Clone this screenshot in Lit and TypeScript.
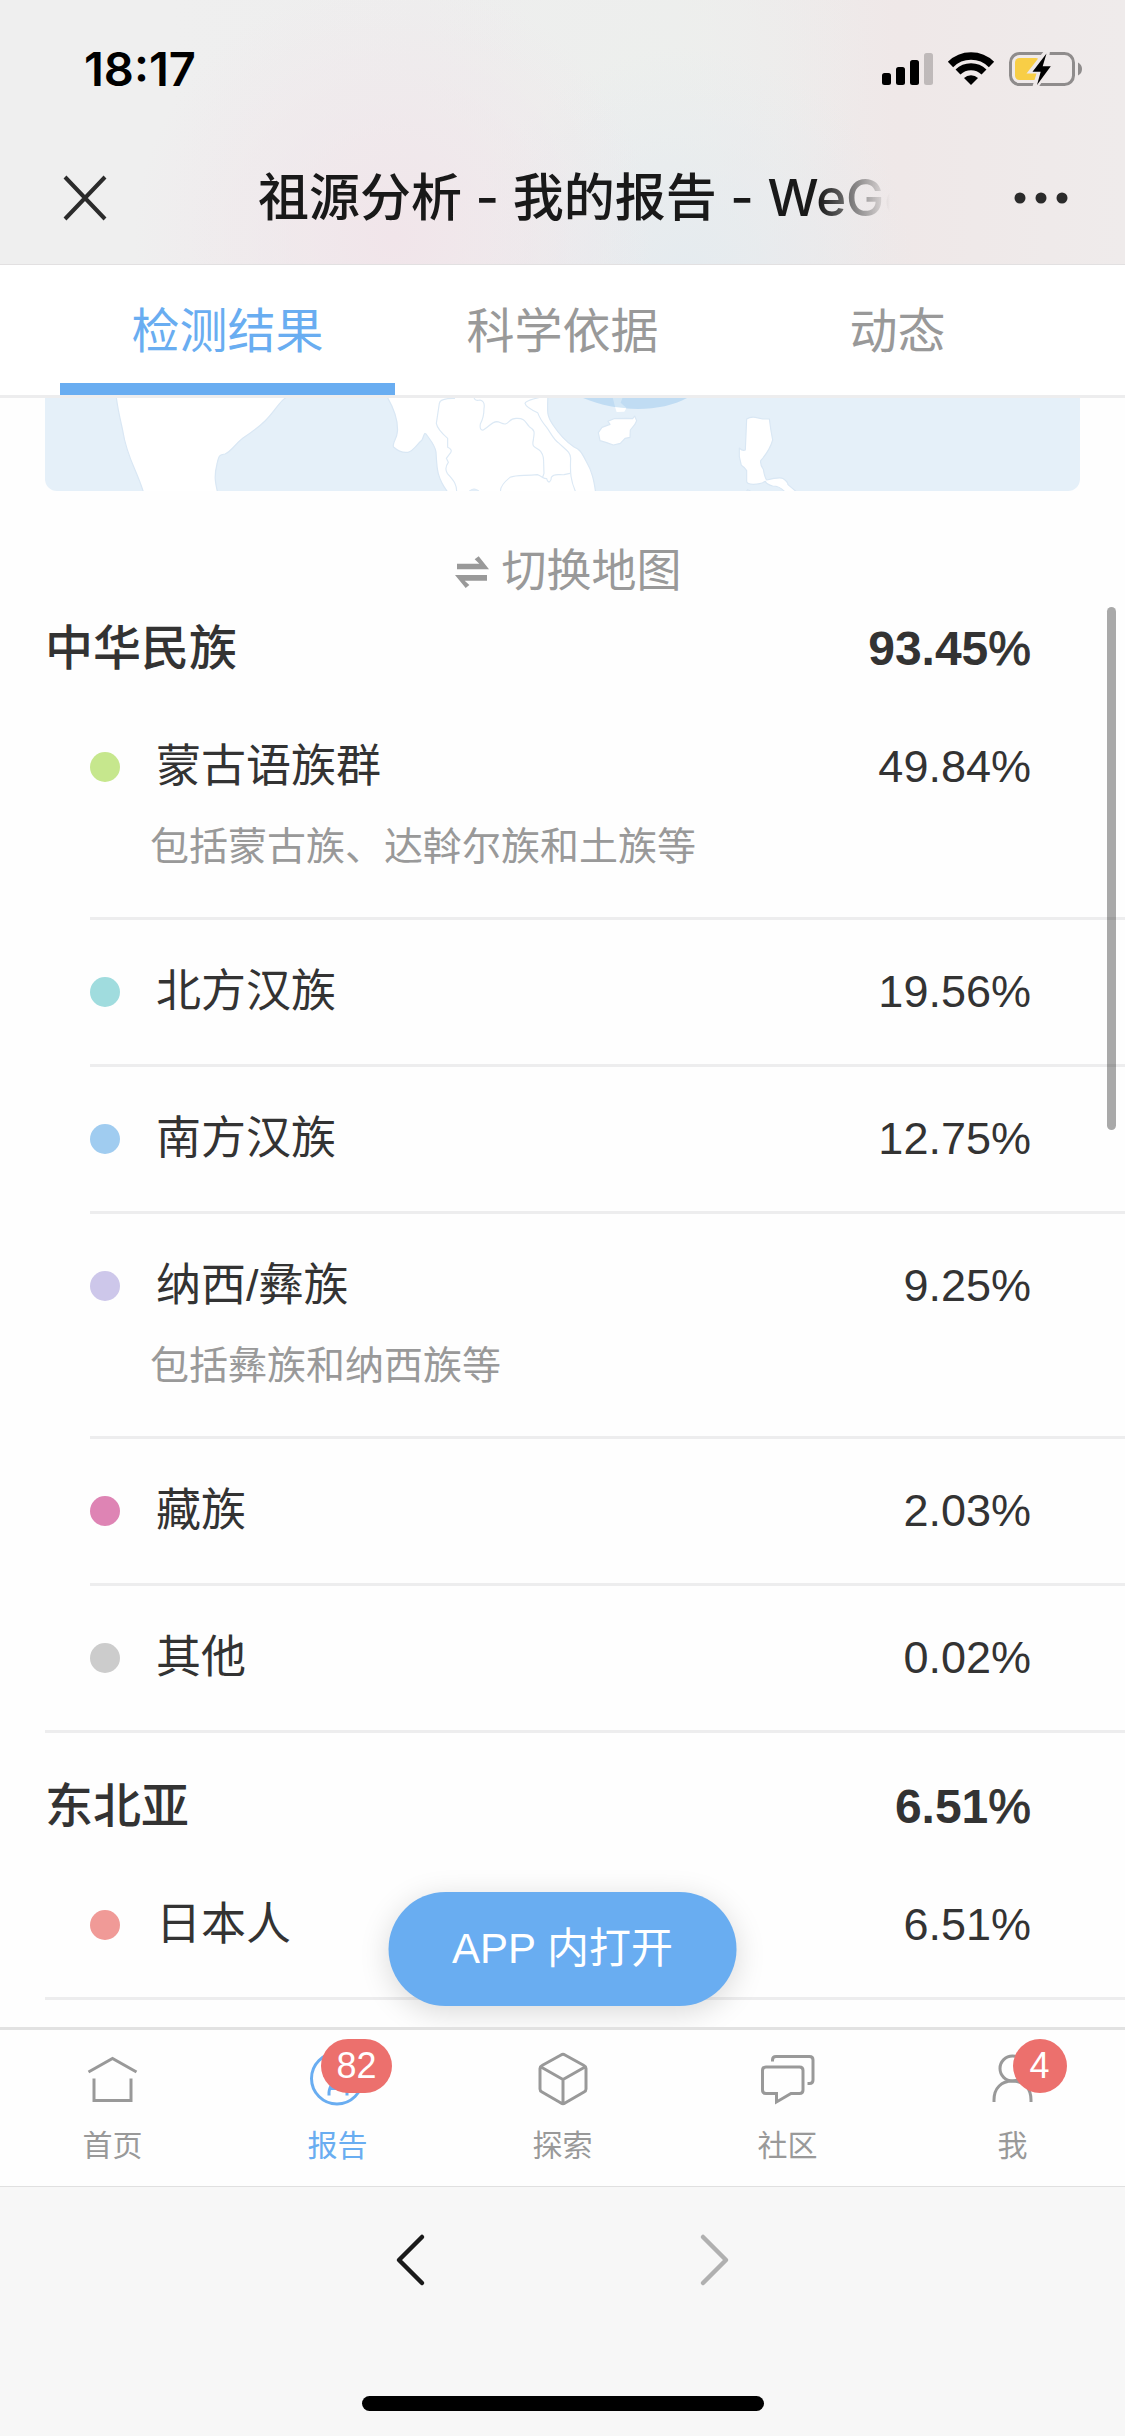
import { LitElement, html, css, svg, nothing, TemplateResult } from "lit";
import { customElement, property, state } from "lit/decorators.js";
import { classMap } from "lit/directives/class-map.js";
import { styleMap } from "lit/directives/style-map.js";

interface Ancestry {
  name: string;
  share: string;
  color: string;
  note?: string;
}

interface Region {
  name: string;
  share: string;
  items: Ancestry[];
}

interface NavItem {
  label: string;
  icon: TemplateResult;
  badge?: number;
}

const REGIONS: Region[] = [
  {
    name: "中华民族",
    share: "93.45",
    items: [
      { name: "蒙古语族群", share: "49.84", color: "#c6e78d", note: "包括蒙古族、达斡尔族和土族等" },
      { name: "北方汉族", share: "19.56", color: "#a0dcde" },
      { name: "南方汉族", share: "12.75", color: "#a0ccf0" },
      { name: "纳西/彝族", share: "9.25", color: "#cdc7ea", note: "包括彝族和纳西族等" },
      { name: "藏族", share: "2.03", color: "#de84b4" },
      { name: "其他", share: "0.02", color: "#cccccc" },
    ],
  },
  {
    name: "东北亚",
    share: "6.51",
    items: [{ name: "日本人", share: "6.51", color: "#f09a97" }],
  },
];

const TABS = ["检测结果", "科学依据", "动态"];

const NAV: NavItem[] = [
  {
    label: "首页",
    icon: svg`<path d="M5.500 22 29.500 8.500 53.500 22M11 28.500V50.500H48V28.500"/>`,
  },
  {
    label: "报告",
    badge: 82,
    icon: svg`<circle cx="29" cy="28.500" r="25.500"/><path d="M21 45.500v-3Q21 39 25 32L30 19l8 20q1 1 1 3.500v3M23 38.500h14"/>`,
  },
  {
    label: "探索",
    icon: svg`<path stroke-linejoin="round" d="M28 5q2-1.500 4 0L51 15.500q2 1 2 3V39q0 2-2 3L32 53q-2 1.500-4 0L9 42q-2-1-2-3V18.500q0-2 2-3ZM8 17l22 12.500L52 17M30 29.500V54"/>`,
  },
  {
    label: "社区",
    icon: svg`<path d="M8 17H41.500q3.500 0 3.500 3.500V40q0 3.500-3.500 3.500H33L18.500 52V43.500H8q-3.500 0-3.500-3.500V20.500Q4.500 17 8 17ZM14.500 11.500V10q0-3.500 3.500-3.500H51.500q3.500 0 3.500 3.500V30q0 3.500-3.500 3.500H49.500"/>`,
  },
  {
    label: "我",
    badge: 4,
    icon: svg`<circle cx="29.500" cy="18.500" r="12.500"/><path d="M11 52V50C11 38 18.500 31 29.500 31S48 38 48 50v2"/>`,
  },
];

@customElement("phone-header")
export class PhoneHeader extends LitElement {
  static styles = css`
    :host {
      display: block;
      border-bottom: 1px solid #e2e0e1;
      background:
        radial-gradient(circle 260px at 35% 90%, #f1e5ea, #f1e5ea00),
        radial-gradient(circle 230px at 61% 105%, #e5ebef, #e5ebef00),
        radial-gradient(circle 230px at 57% 25%, #edefed, #edefed00),
        linear-gradient(90deg, #efefef 15%, #ededed 60%, #efe8e8 80%, #efebeb);
    }
    .status {
      display: flex;
      align-items: center;
      justify-content: space-between;
      padding: 37px 43px 31px 84px;
      font: 600 47px/64px Inter, sans-serif;
      color: #000;
    }
    .signals {
      width: 200px;
      height: 34px;
    }
    .bar {
      display: flex;
      align-items: center;
      padding: 0 57px 0 58px;
      height: 132px;
    }
    button {
      flex: none;
      display: flex;
      padding: 0;
      border: 0;
      background: none;
    }
    button svg {
      width: 54px;
      height: 54px;
    }
    h1 {
      flex: 1;
      min-width: 0;
      margin: 0 124px 0 146px;
      overflow: hidden;
      white-space: nowrap;
      font: 500 51px/72px Inter, "Noto Sans CJK SC", sans-serif;
      color: #191919;
      mask-image: linear-gradient(90deg, #000 calc(100% - 72px), transparent);
    }
  `;

  render() {
    return html`
      <div class="status">
        <span>18:17</span>
        <svg class="signals" viewBox="0 0 200 34" role="img" aria-label="信号、无线网络和电池">
          <rect y="21" width="9" height="12" rx="2.500" />
          <rect x="14" y="15" width="9" height="18" rx="2.500" />
          <rect x="28" y="8" width="9" height="25" rx="2.500" />
          <rect x="42" y="1" width="9" height="32" rx="2.500" opacity=".2" />
          <g fill="none" stroke="#000">
            <path stroke-width="7.500" d="M68.500 12.500a29 29 0 0 1 41 0" />
            <path stroke-width="7" d="M76 20a18.500 18.500 0 0 1 26 0" />
          </g>
          <path d="M89 33 82 26a10 10 0 0 1 14 0Z" />
          <rect x="128.500" y="1.500" width="63" height="31" rx="9" fill="none" stroke="#8f8c8c" stroke-width="3" />
          <path fill="#8f8c8c" d="M196 10.500q4 2 4 6.500t-4 6.500Z" />
          <rect x="133" y="6" width="25" height="22" rx="4.500" fill="#f8ce46" />
          <path fill="#eee8e8" d="M162-1 144.500 21.500H154.500L150 36H156L171 13H166L168-1Z" />
          <path d="M164.500 1.500 150.500 19.700H158.700L155 33 168.800 14.300H160.700Z" />
        </svg>
      </div>
      <div class="bar">
        <button aria-label="关闭">
          <svg viewBox="0 0 54 54" fill="none" stroke="#2b2b2b" stroke-width="4">
            <path d="M7 6 47 48M47 6 7 48" />
          </svg>
        </button>
        <h1>祖源分析 - 我的报告 - WeGene</h1>
        <button aria-label="更多">
          <svg viewBox="0 0 54 54" fill="#2b2b2b">
            <circle cx="6" cy="27" r="5.500" />
            <circle cx="27" cy="27" r="5.500" />
            <circle cx="48" cy="27" r="5.500" />
          </svg>
        </button>
      </div>
    `;
  }
}

@customElement("ancestry-map")
export class AncestryMap extends LitElement {
  static styles = css`
    :host {
      display: block;
      margin: 0 45px;
      overflow: hidden;
      border-radius: 0 0 12px 12px;
      background: #e5f0f9;
    }
    svg {
      display: block;
      width: 100%;
    }
  `;

  render() {
    return html`
      <svg viewBox="0 0 1035 93" role="img" aria-label="祖源分布地图">
        <g fill="#fff" stroke="#d9e7f4" stroke-width="1.200" stroke-linejoin="round">
          <path d="M71-3C73 14 77 28 78 34 82 60 92 72 99 96H173C170 84 169 78 172 66 174 56 175 57 180 56 187 53 190 46 198 40 207 34 213 30 220 23 232 11 235 1 246-3Z" />
          <path d="M341-3C349 10 353 22 352.500 33 352 42 347 44 348.500 49 353 53 358 55 363 54.300 369 53 372 46 377 42 379 38 379 34 381 36 386 43 390 47 391 54 392 68 391 78 402 93L403 97H551C549 82 547 73 541 63 536 53 534 51 529 49 520 43 514 36 508 27 502 18 502 15 503-3Z" />
        </g>
        <g transform="translate(355 -8) scale(.33333)">
          <g fill="none" stroke="#dce9f5" stroke-width="3.500" stroke-linejoin="round">
            <path d="M165 25Q120 24 118 40L109 100Q112 118 143 145V172Q158 178 152 188L139 205 145 217Q132 235 142 250C160 272 170 280 170 306" />
            <path d="M222 22Q224 34 240 30 256 34 252 55 252 82 241 102 238 122 250 120C272 106 275 96 290 95 300 95 305 103 316 102 330 98 328 84 350 85 376 84 376 98 388 110 408 122 402 130 400 150 394 175 408 170 422 184 434 200 430 215 432 250L427 264" />
            <path d="M302 306Q298 288 330 262C350 254 370 258 412 254 425 258 430 266 440 266 445 284 454 274 454 262 462 248 480 256 492 254L510 250" />
            <path d="M420 22Q376 32 375 40 378 52 413 68C420 88 428 98 440 112 452 128 460 148 475 158 495 178 512 186 512 205 510 250 512 272 527 306" />
          </g>
          <path fill="#e5f0f9" stroke="#dce9f5" stroke-width="3" d="M207 304Q222 290 238 304Z" />
          <path fill="#c0dcf3" d="M540 20C650 70 790 68 868 20Z" />
          <path fill="#d3e7f6" d="M638 22 646 54 680 55 662 38 668 22Z" />
          <g fill="#fff" stroke="#d9e7f4" stroke-width="3.500" stroke-linejoin="round">
            <path stroke="none" d="M645 51 650 66 673 65 679 55Z" />
            <path d="M624 94 642 86 680 85 698 86 704 78 710 92 704 104 691 120 690 142 675 145 661 160 640 165 620 158 600 152 595 128 606 112 630 103Z" />
            <path d="M1040 87Q1050 80 1066 82L1088 87 1108 87Q1112 120 1118 150 1110 180 1082 212 1080 225 1090 238 1094 262 1100 270 1140 260 1150 266 1164 276 1164 284L1190 306H1155Q1140 288 1118 288 1100 284 1096 274 1085 282 1060 283 1040 283 1040 274L1040 242Q1034 232 1024 226L1018 200 1018 174Q1028 184 1036 180Z" />
            <path fill="none" d="M1038 306 1043 299 1052 304" />
          </g>
        </g>
      </svg>
    `;
  }
}

@customElement("region-group")
export class RegionGroup extends LitElement {
  @property({ attribute: false }) region!: Region;

  static styles = css`
    :host {
      display: block;
      color: #333;
    }
    .line {
      display: flex;
      align-items: center;
      justify-content: space-between;
      padding-right: 94px;
    }
    h2 {
      margin: 0;
      padding-left: 45px;
      font-size: 48px;
      font-weight: 500;
      line-height: 92px;
    }
    .total {
      font-weight: 700;
    }
    .unit {
      font-weight: 400;
      -webkit-text-stroke: 1px;
    }
    ul {
      margin: 0;
      padding: 0;
      list-style: none;
      font-size: 45px;
      line-height: 72px;
    }
    li {
      margin-left: 90px;
      padding: 36px 0;
      border-bottom: 3px solid #ededee;
    }
    li:last-child {
      margin-left: 45px;
      padding-left: 45px;
    }
    .name {
      display: flex;
      align-items: center;
      gap: 36px;
    }
    .dot {
      width: 30px;
      height: 30px;
      border-radius: 50%;
    }
    p {
      margin: 0;
      padding: 10px 0 0 60px;
      font-size: 39px;
      line-height: 68px;
      color: #999;
    }
  `;

  render() {
    const { name, share, items } = this.region;
    return html`
      <h2 class="line">
        <span>${name}</span>
        <span><span class="total">${share}</span><span class="unit">%</span></span>
      </h2>
      <ul>
        ${items.map(
          (item) => html`
            <li>
              <div class="line">
                <span class="name">
                  <span class="dot" style=${styleMap({ background: item.color })}></span>
                  ${item.name}
                </span>
                <span>${item.share}%</span>
              </div>
              ${item.note ? html`<p>${item.note}</p>` : nothing}
            </li>
          `
        )}
      </ul>
    `;
  }
}

@customElement("app-root")
export class AppRoot extends LitElement {
  @state() private tab = 0;
  @state() private page = 1;

  static styles = css`
    :host {
      display: flex;
      flex-direction: column;
      min-height: 100vh;
      background: #fefefe;
      font-family: "Liberation Sans", "Noto Sans CJK SC", sans-serif;
      color: #333;
    }
    button {
      padding: 0;
      border: 0;
      background: none;
      font-family: inherit;
      color: inherit;
    }
    .tabs {
      display: flex;
      padding: 0 60px;
      border-bottom: 3px solid #ededee;
      background: #fff;
    }
    .tab {
      flex: 1;
      padding: 16px 0 0;
      border-bottom: 12px solid transparent;
      font-size: 48px;
      line-height: 102px;
      color: #999;
    }
    .tab.active {
      border-color: #69adf1;
      color: #69adf1;
    }
    main {
      position: relative;
      flex: 1;
      padding-bottom: 27px;
    }
    .switch {
      display: flex;
      align-items: center;
      justify-content: center;
      gap: 12px;
      width: 100%;
      padding: 50px 0 0 12px;
      font-size: 45px;
      line-height: 62px;
      color: #999;
    }
    .switch svg {
      width: 34px;
      height: 32px;
    }
    region-group + region-group {
      margin-top: 28px;
    }
    .thumb {
      position: absolute;
      top: 209px;
      right: 9px;
      width: 9px;
      height: 523px;
      border-radius: 5px;
      background: #00000055;
    }
    .open {
      position: absolute;
      bottom: 21px;
      left: 50%;
      translate: -50%;
      padding: 0 64px;
      border-radius: 57px;
      background: #69adf1;
      box-shadow: 0 6px 30px #00000026;
      font-size: 42px;
      line-height: 114px;
      white-space: nowrap;
      color: #fff;
    }
    .nav {
      position: relative;
      display: flex;
      border-top: 3px solid #e2e2e2;
      background: #fefefe;
    }
    .nav a {
      flex: 1;
      display: flex;
      flex-direction: column;
      align-items: center;
      gap: 12px;
      padding: 20px 0 16px;
      font-size: 30px;
      line-height: 48px;
      text-decoration: none;
      color: #999;
    }
    .nav a.active {
      color: #69adf1;
    }
    .icon {
      position: relative;
      width: 60px;
      height: 60px;
    }
    .icon svg {
      display: block;
      fill: none;
      stroke: currentColor;
      stroke-width: 3;
    }
    .badge {
      position: absolute;
      top: -11px;
      right: -24px;
      box-sizing: border-box;
      min-width: 54px;
      padding: 0 15px;
      border-radius: 27px;
      background: #ec706d;
      font-size: 36px;
      line-height: 54px;
      text-align: center;
      color: #fff;
    }
    footer {
      display: flex;
      flex-direction: column;
      align-items: center;
      gap: 109px;
      padding: 46px 0 25px;
      border-top: 1px solid #e0e0e0;
      background: #f7f7f7;
    }
    .history {
      display: flex;
      gap: 249px;
    }
    .history button {
      display: flex;
      color: #1a1a1a;
    }
    .history button:disabled {
      color: #b0b0b0;
    }
    .history svg {
      width: 54px;
      height: 54px;
    }
    .home {
      width: 402px;
      height: 15px;
      border-radius: 8px;
      background: #000;
    }
  `;

  render() {
    return html`
      <phone-header></phone-header>
      <div class="tabs" role="tablist">
        ${TABS.map(
          (label, i) => html`
            <button
              role="tab"
              aria-selected=${i === this.tab}
              class=${classMap({ tab: true, active: i === this.tab })}
              @click=${() => (this.tab = i)}
            >${label}</button>
          `
        )}
      </div>
      <main>
        <ancestry-map></ancestry-map>
        <button class="switch">
          <svg viewBox="0 0 102 96" fill="currentColor" aria-hidden="true">
            <path d="M6 23H73L59 10 71 1 102 40H6ZM96 57H0L32 96 43 87 29 74H96Z" />
          </svg>
          切换地图
        </button>
        ${REGIONS.map((region) => html`<region-group .region=${region}></region-group>`)}
        <div class="thumb"></div>
        <button class="open">APP 内打开</button>
      </main>
      <nav class="nav">
        ${NAV.map(
          (item, i) => html`
            <a
              href="#"
              class=${classMap({ active: i === this.page })}
              @click=${(e: Event) => {
                e.preventDefault();
                this.page = i;
              }}
            >
              <span class="icon">
                <svg viewBox="0 0 60 60" aria-hidden="true">${item.icon}</svg>
                ${item.badge ? html`<span class="badge">${item.badge}</span>` : nothing}
              </span>
              ${item.label}
            </a>
          `
        )}
      </nav>
      <footer>
        <div class="history">
          <button aria-label="后退">
            <svg viewBox="0 0 54 54" fill="none" stroke="currentColor" stroke-width="4.500" stroke-linecap="round" stroke-linejoin="round">
              <path d="M38 4 15 27 38 50" />
            </svg>
          </button>
          <button aria-label="前进" disabled>
            <svg viewBox="0 0 54 54" fill="none" stroke="currentColor" stroke-width="4.500" stroke-linecap="round" stroke-linejoin="round">
              <path d="M16 4 39 27 16 50" />
            </svg>
          </button>
        </div>
        <div class="home"></div>
      </footer>
    `;
  }
}
